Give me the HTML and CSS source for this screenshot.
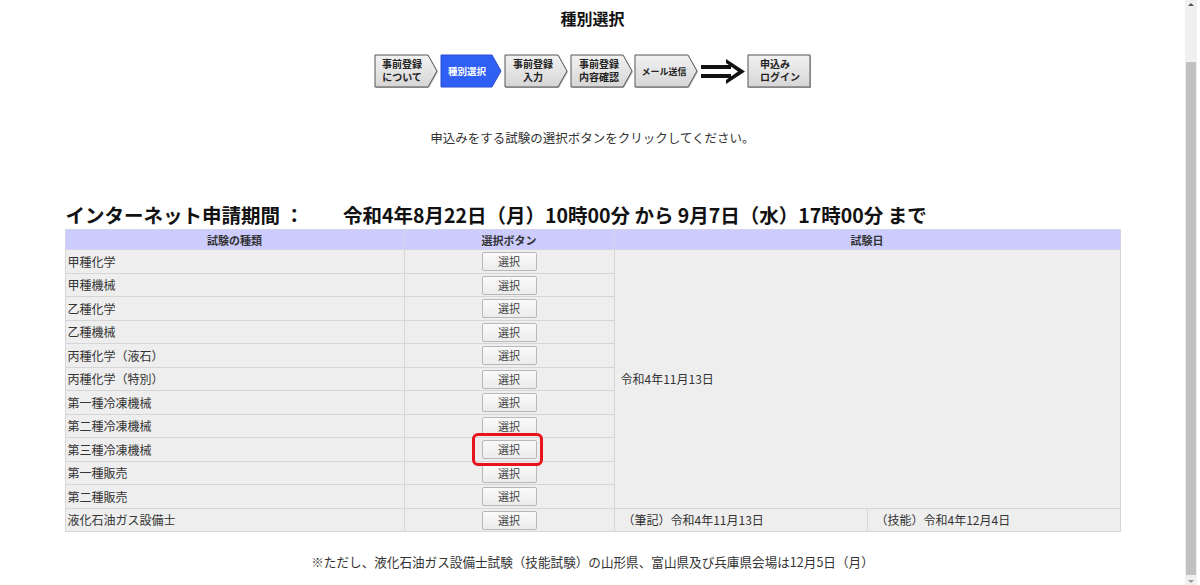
FILE: index.html
```html
<!DOCTYPE html>
<html lang="ja">
<head>
    <meta charset="UTF-8">
    <title>種別選択</title>
    <link rel="stylesheet" href="styles.css">
</head>
<body>
    <div class="page">
        <h1 class="title">種別選択</h1>

        <div class="steps">
            <svg width="440" height="36" viewBox="0 0 440 36">
                <defs>
                    <linearGradient id="grey" x1="0" y1="0" x2="0" y2="1">
                        <stop offset="0" stop-color="#f2f2f2"/>
                        <stop offset="1" stop-color="#d6d6d6"/>
                    </linearGradient>
                </defs>
                <g class="step-shadow">
                    <polygon points="2,2 55,2 64,18 55,34 2,34"/>
                    <polygon points="132,2 185,2 194,18 185,34 132,34"/>
                    <polygon points="198,2 250,2 259,18 250,34 198,34"/>
                    <polygon points="262,2 315,2 324,18 315,34 262,34"/>
                    <rect x="375" y="2" width="62" height="32"/>
                </g>
                <g class="step">
                    <polygon points="1,1 54,1 63,17 54,33 1,33"/>
                    <polygon points="131,1 184,1 193,17 184,33 131,33"/>
                    <polygon points="197,1 249,1 258,17 249,33 197,33"/>
                    <polygon points="261,1 314,1 323,17 314,33 261,33"/>
                    <rect x="374" y="1" width="62" height="32"/>
                </g>
                <polygon class="step-on" points="67,1 118,1 127,17 118,33 67,33"/>

                <g class="arrow">
                    <rect x="327" y="11" width="30" height="4"/>
                    <rect x="327" y="20" width="30" height="4"/>
                    <polygon points="352,5 371,17.5 352,30 352,26 364,17.5 352,9"/>
                </g>

                <g class="step-text">
                    <text x="28" y="14">事前登録</text>
                    <text x="28" y="27">について</text>
                    <text x="159" y="14">事前登録</text>
                    <text x="159" y="27">入力</text>
                    <text x="225" y="14">事前登録</text>
                    <text x="225" y="27">内容確認</text>
                    <text x="290" y="21" class="small">メール送信</text>
                    <text x="386" y="14" class="left">申込み</text>
                    <text x="386" y="27" class="left">ログイン</text>
                </g>
                <text x="93" y="21" class="step-text-on">種別選択</text>
            </svg>
        </div>

        <p class="lead">申込みをする試験の選択ボタンをクリックしてください。</p>

        <div class="wrap">
            <h2 class="period">インターネット申請期間 ：　　令和4年8月22日（月）10時00分 から 9月7日（水）17時00分 まで</h2>

            <table class="exam">
                <colgroup>
                    <col class="c-name">
                    <col class="c-btn">
                    <col class="c-day">
                    <col class="c-day">
                </colgroup>
                <tr>
                    <th>試験の種類</th>
                    <th>選択ボタン</th>
                    <th colspan="2">試験日</th>
                </tr>
                <tr>
                    <td>甲種化学</td>
                    <td class="center"><button class="pick">選択</button></td>
                    <td colspan="2" rowspan="11">令和4年11月13日</td>
                </tr>
                <tr>
                    <td>甲種機械</td>
                    <td class="center"><button class="pick">選択</button></td>
                </tr>
                <tr>
                    <td>乙種化学</td>
                    <td class="center"><button class="pick">選択</button></td>
                </tr>
                <tr>
                    <td>乙種機械</td>
                    <td class="center"><button class="pick">選択</button></td>
                </tr>
                <tr>
                    <td>丙種化学（液石）</td>
                    <td class="center"><button class="pick">選択</button></td>
                </tr>
                <tr>
                    <td>丙種化学（特別）</td>
                    <td class="center"><button class="pick">選択</button></td>
                </tr>
                <tr>
                    <td>第一種冷凍機械</td>
                    <td class="center"><button class="pick">選択</button></td>
                </tr>
                <tr>
                    <td>第二種冷凍機械</td>
                    <td class="center"><button class="pick">選択</button></td>
                </tr>
                <tr>
                    <td>第三種冷凍機械</td>
                    <td class="center"><span class="marked"><button class="pick">選択</button></span></td>
                </tr>
                <tr>
                    <td>第一種販売</td>
                    <td class="center"><button class="pick">選択</button></td>
                </tr>
                <tr>
                    <td>第二種販売</td>
                    <td class="center"><button class="pick">選択</button></td>
                </tr>
                <tr>
                    <td>液化石油ガス設備士</td>
                    <td class="center"><button class="pick">選択</button></td>
                    <td>（筆記）令和4年11月13日</td>
                    <td>（技能）令和4年12月4日</td>
                </tr>
            </table>
        </div>

        <p class="note">※ただし、液化石油ガス設備士試験（技能試験）の山形県、富山県及び兵庫県会場は12月5日（月）</p>
    </div>

    <div class="scrollbar">
        <div class="sb-up"></div>
        <div class="sb-thumb"></div>
        <div class="sb-down"></div>
    </div>
</body>
</html>
```

FILE: styles.css
```css
html, body {
    height: 100%;
}
body {
    margin: 0;
    display: flex;
    overflow: hidden;
    font-family: "Noto Sans CJK JP", "Noto Sans", sans-serif;
    color: #222;
    background: #fff;
}
.page {
    flex: 1;
    min-width: 0;
}
.title {
    margin: 0;
    padding-top: 6px;
    text-align: center;
    font-size: 16px;
    line-height: 24px;
    font-weight: bold;
    color: #111;
}
.steps {
    display: flex;
    justify-content: center;
    margin-top: 24px;
}
.steps svg {
    display: block;
    margin-left: 2px;
}
.step polygon, .step rect {
    fill: url(#grey);
    stroke: #555;
    stroke-width: 1;
}
.step-shadow polygon, .step-shadow rect {
    fill: #bbb;
}
.step-on {
    fill: #2f5ff5;
    stroke: #2a4fd0;
    stroke-width: 1;
}
.arrow rect, .arrow polygon {
    fill: #111;
}
.step-text text {
    font-size: 10px;
    font-weight: bold;
    fill: #222;
    text-anchor: middle;
}
.step-text text.small {
    font-size: 9px;
}
.step-text text.left {
    text-anchor: start;
}
.step-text-on {
    font-size: 9.5px;
    font-weight: bold;
    fill: #fff;
    text-anchor: middle;
}
.lead {
    margin: 38px 0 0;
    text-align: center;
    font-size: 12.5px;
    line-height: 20px;
    color: #333;
}
.wrap {
    width: 1056px;
    margin: 55px auto 0;
}
.period {
    margin: 0 0 2px 1px;
    font-size: 19.5px;
    line-height: 24px;
    font-weight: bold;
    color: #111;
    white-space: pre;
}
.exam {
    width: 1056px;
    border-collapse: collapse;
    table-layout: fixed;
    font-size: 12px;
    color: #333;
    border: 1px solid #9a9a9a;
    border-top-color: #d0d0d0;
    border-right-color: #b0b0b0;
}
.c-name { width: 339px; }
.c-btn { width: 210px; }
.c-day { width: 253px; }
.exam th {
    height: 19px;
    padding: 0;
    background: #ccccff;
    font-size: 11px;
    font-weight: bold;
    color: #333;
    border: 1px solid #d4d4e8;
}
.exam td {
    height: 22.5px;
    padding: 0 2px;
    background: #eeeeee;
    border: 1px solid #d6d6d6;
    white-space: nowrap;
}
.exam td[rowspan] {
    padding-left: 6px;
}
.exam tr:last-child td:nth-child(3),
.exam tr:last-child td:nth-child(4) {
    padding-left: 8px;
}
.center {
    text-align: center;
}
.pick {
    display: inline-block;
    vertical-align: middle;
    width: 55px;
    height: 19px;
    padding: 0;
    font-family: inherit;
    font-size: 11px;
    line-height: 17px;
    color: #444;
    background: linear-gradient(#fafafa, #ececec);
    border: 1px solid #b8b8b8;
    border-radius: 2px;
}
.marked {
    position: relative;
    display: inline-block;
    vertical-align: middle;
}
.marked .pick {
    display: block;
}
.marked::after {
    content: "";
    position: absolute;
    left: -10px;
    right: -6px;
    top: -7px;
    bottom: -7px;
    border: 3px solid #e8141c;
    border-radius: 6px;
}
.note {
    margin: 20px 0 0;
    text-align: center;
    font-size: 12.6px;
    line-height: 20px;
    color: #333;
}
.scrollbar {
    width: 12px;
    margin-right: 3px;
    display: flex;
    flex-direction: column;
    background: #f0f0f0;
}
.sb-up, .sb-down {
    height: 10px;
    position: relative;
}
.sb-up::before, .sb-down::before {
    content: "";
    position: absolute;
    left: 3px;
    border-left: 3px solid transparent;
    border-right: 3px solid transparent;
}
.sb-up::before {
    top: 3px;
    border-bottom: 3px solid #555;
}
.sb-down::before {
    bottom: 2px;
    border-top: 3px solid #999;
}
.sb-thumb {
    flex: 1;
    margin: 52px 1px 0;
    background: #c1c1c1;
}
```
